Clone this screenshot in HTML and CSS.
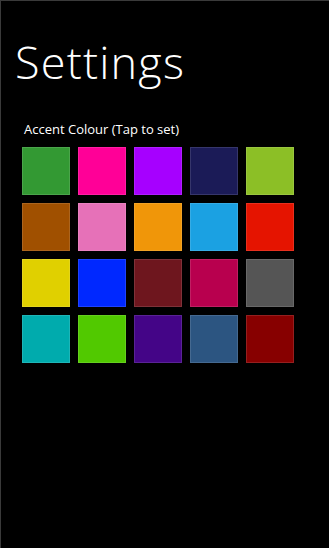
FILE: index.html
```html
<!DOCTYPE html>
<html lang="en">
<head>
<meta charset="utf-8">
<title>Settings</title>
<link rel="stylesheet" href="styles.css">
</head>
<body>
<div class="page">
  <h1 class="title">Settings</h1>
  <p class="label">Accent Colour (Tap to set)</p>
  <div class="swatches">
    <div class="swatch c-green"></div>
    <div class="swatch c-magenta"></div>
    <div class="swatch c-purple"></div>
    <div class="swatch c-navy"></div>
    <div class="swatch c-lime"></div>

    <div class="swatch c-brown"></div>
    <div class="swatch c-pink"></div>
    <div class="swatch c-orange"></div>
    <div class="swatch c-blue"></div>
    <div class="swatch c-red"></div>

    <div class="swatch c-yellow"></div>
    <div class="swatch c-cobalt"></div>
    <div class="swatch c-wine"></div>
    <div class="swatch c-crimson"></div>
    <div class="swatch c-gray"></div>

    <div class="swatch c-teal"></div>
    <div class="swatch c-leaf"></div>
    <div class="swatch c-indigo"></div>
    <div class="swatch c-steel"></div>
    <div class="swatch c-maroon"></div>
  </div>
</div>
</body>
</html>
```

FILE: styles.css
```css
html, body {
  margin: 0;
  padding: 0;
  background: #000;
}

.page {
  box-sizing: border-box;
  width: 329px;
  height: 548px;
  border-top: 1px solid #3a3a3a;
  border-left: 1px solid #3a3a3a;
  padding: 35px 0 0 14px;
  color: #fff;
  font-family: "Open Sans", "Noto Sans", sans-serif;
}

.title {
  margin: 0;
  font-size: 45px;
  font-weight: 300;
  line-height: 52px;
  letter-spacing: 1.2px;
}

.label {
  margin: 31px 0 0 9px;
  font-size: 13px;
  font-weight: 400;
  line-height: 20px;
}

.swatches {
  margin: 8px 0 0 7px;
  display: grid;
  grid-template-columns: repeat(5, 48px);
  grid-auto-rows: 48px;
  gap: 8px;
}

.swatch {
  box-shadow: inset 0 0 0 1px rgba(255, 255, 255, 0.12);
}

.c-green   { background: #339933; }
.c-magenta { background: #ff0097; }
.c-purple  { background: #a600ff; }
.c-navy    { background: #1b1b57; }
.c-lime    { background: #8cbf26; }

.c-brown   { background: #a05000; }
.c-pink    { background: #e671b8; }
.c-orange  { background: #f09609; }
.c-blue    { background: #1ba1e2; }
.c-red     { background: #e51400; }

.c-yellow  { background: #e0d000; }
.c-cobalt  { background: #0028ff; }
.c-wine    { background: #6e161e; }
.c-crimson { background: #b8004e; }
.c-gray    { background: #555555; }

.c-teal    { background: #00abad; }
.c-leaf    { background: #51c900; }
.c-indigo  { background: #440587; }
.c-steel   { background: #2c5581; }
.c-maroon  { background: #870000; }
```
